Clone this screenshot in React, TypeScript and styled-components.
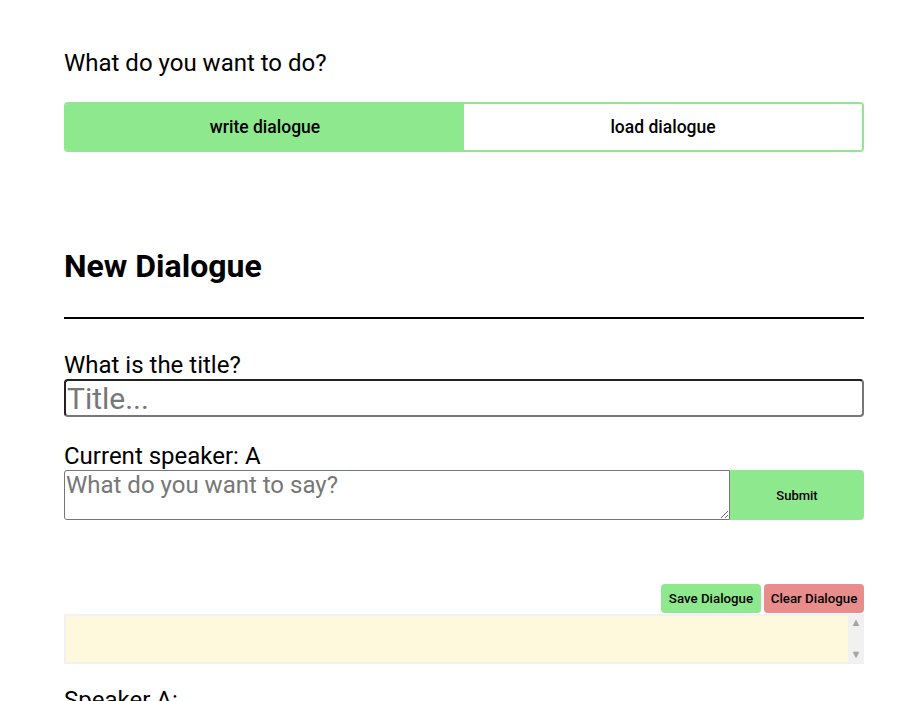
import React, { useState } from 'react';
import styled, { createGlobalStyle } from 'styled-components';

const GlobalStyle = createGlobalStyle`
  body {
    margin: 0;
    background: #ffffff;
    font-family: Roboto, "Liberation Sans", sans-serif;
    color: #000;
  }
`

const Page = styled.div`
  width: 800px;
  padding: 46px 0 0 64px;
  box-sizing: content-box;
  height: 655px;
  overflow: hidden;
`
const Question = styled.p`
  font-size: 24px;
  margin: 0 0 22px;
  line-height: 34px;
`
const Toggle = styled.div`
  display: flex;
  height: 50px;
  border: 2px solid #8ee88e;
  border-radius: 4px;
  box-sizing: border-box;
  overflow: hidden;
`
const ToggleButton = styled.button<{ $active?: boolean }>`
  flex: 1;
  border: none;
  margin: 0;
  background: ${({ $active }) => ($active ? '#8ee88e' : '#ffffff')};
  font-family: Roboto, "Liberation Sans", sans-serif;
  font-size: 17.5px;
  font-weight: 500;
  color: #000;
  cursor: pointer;
`
const Heading = styled.h2`
  font-size: 32px;
  font-weight: 700;
  margin: 95px 0 0;
  line-height: 38px;
`
const Divider = styled.hr`
  border: none;
  border-top: 2px solid #000;
  margin: 32px 0 0;
`
const Field = styled.div<{ $gap: number }>`
  display: flex;
  flex-direction: column;
  margin-top: ${({ $gap }) => $gap}px;
`
const Label = styled.label`
  font-size: 24px;
  line-height: 28px;
`
const TitleInput = styled.input`
  height: 38px;
  box-sizing: border-box;
  border: 2px solid #222;
  border-right-color: #777;
  border-bottom-color: #777;
  border-radius: 4px;
  padding: 0 1px;
  font-family: Roboto, "Liberation Sans", sans-serif;
  font-size: 30px;
  &::placeholder {
    color: #777;
  }
`
const SpeakRow = styled.div`
  display: flex;
  height: 50px;
`
const SpeechArea = styled.textarea`
  flex: 1;
  box-sizing: border-box;
  border: 1px solid #767676;
  border-radius: 3px 0 0 3px;
  padding: 0 1px;
  margin: 0;
  font-family: Roboto, "Liberation Sans", sans-serif;
  font-size: 24px;
  line-height: 28px;
  resize: both;
  &::placeholder {
    color: #777;
  }
`
const SubmitButton = styled.button`
  width: 134px;
  border: none;
  background: #8ee88e;
  border-radius: 0 4px 4px 0;
  font-family: Roboto, "Liberation Sans", sans-serif;
  font-size: 13px;
  font-weight: 500;
  color: #000;
`
const ActionRow = styled.div`
  display: flex;
  justify-content: flex-end;
  gap: 3px;
  margin-top: 64px;
`
const ActionButton = styled.button<{ $tone: 'save' | 'clear' }>`
  height: 29px;
  width: 100px;
  border: none;
  border-radius: 4px;
  padding: 0;
  background: ${({ $tone }) => ($tone === 'save' ? '#8ee88e' : '#e88c8c')};
  font-family: Roboto, "Liberation Sans", sans-serif;
  font-size: 13.3px;
  font-weight: 500;
  color: #000;
`
const DialogueBox = styled.div`
  display: flex;
  height: 50px;
  margin-top: 1px;
  box-sizing: border-box;
  border: 2px solid #f1f1f1;
  border-right: none;
  background: #fef9dc;
`
const DialogueLines = styled.div`
  flex: 1;
`
const ScrollTrack = styled.div`
  width: 16px;
  margin: -2px 0;
  padding: 1px 0;
  background: #f1f1f1;
  display: flex;
  flex-direction: column;
  justify-content: space-between;
  align-items: center;
  color: #a3a3a3;
  font-size: 11px;
  line-height: 16px;
`
const SpeakerLine = styled.p`
  font-size: 24px;
  margin: 22px 0 0;
  line-height: 28px;
`

export default function App() {
  const [mode, setMode] = useState<'write' | 'load'>('write')
  const [title, setTitle] = useState('')
  const [line, setLine] = useState('')

  return (
    <>
      <GlobalStyle />
      <Page>
        <Question>What do you want to do?</Question>
        <Toggle>
          <ToggleButton $active={mode === 'write'} onClick={() => setMode('write')}>write dialogue</ToggleButton>
          <ToggleButton $active={mode === 'load'} onClick={() => setMode('load')}>load dialogue</ToggleButton>
        </Toggle>
        <Heading>New Dialogue</Heading>
        <Divider />
        <Field $gap={32}>
          <Label>What is the title?</Label>
          <TitleInput placeholder="Title..." value={title} onChange={e => setTitle(e.target.value)} />
        </Field>
        <Field $gap={25}>
          <Label>Current speaker: A</Label>
          <SpeakRow>
            <SpeechArea placeholder="What do you want to say?" value={line} onChange={e => setLine(e.target.value)} />
            <SubmitButton>Submit</SubmitButton>
          </SpeakRow>
        </Field>
        <ActionRow>
          <ActionButton $tone="save">Save Dialogue</ActionButton>
          <ActionButton $tone="clear">Clear Dialogue</ActionButton>
        </ActionRow>
        <DialogueBox>
          <DialogueLines />
          <ScrollTrack>
            <span>▲</span>
            <span>▼</span>
          </ScrollTrack>
        </DialogueBox>
        <SpeakerLine>Speaker A:</SpeakerLine>
      </Page>
    </>
  )
}
